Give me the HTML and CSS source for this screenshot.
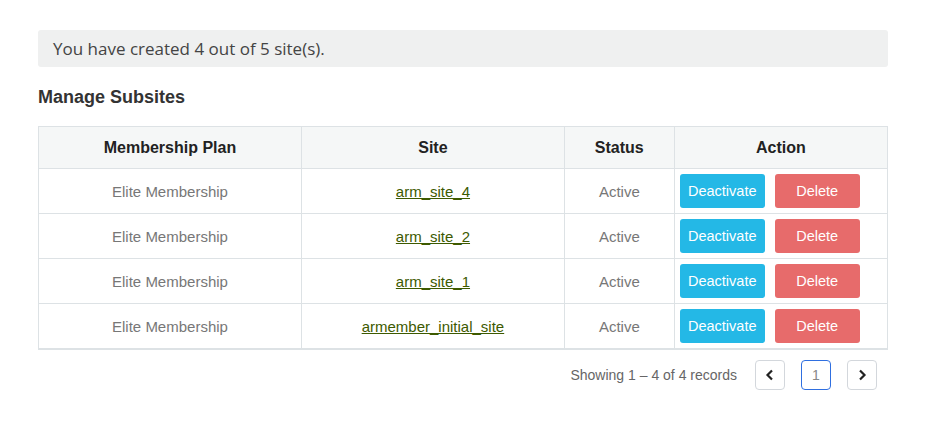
FILE: index.html
```html
<!DOCTYPE html>
<html>
<head>
<meta charset="utf-8">
<link rel="stylesheet" href="styles.css">
</head>
<body>
<div class="wrap">
  <div class="notice">You have created 4 out of 5 site(s).</div>
  <h2 class="title">Manage Subsites</h2>
  <table class="grid">
    <thead>
      <tr><th class="c1">Membership Plan</th><th class="c2">Site</th><th class="c3">Status</th><th class="c4">Action</th></tr>
    </thead>
    <tbody>
      <tr><td>Elite Membership</td><td><a href="#">arm_site_4</a></td><td>Active</td><td class="act"><span class="btn blue">Deactivate</span><span class="btn red">Delete</span></td></tr>
      <tr><td>Elite Membership</td><td><a href="#">arm_site_2</a></td><td>Active</td><td class="act"><span class="btn blue">Deactivate</span><span class="btn red">Delete</span></td></tr>
      <tr><td>Elite Membership</td><td><a href="#">arm_site_1</a></td><td>Active</td><td class="act"><span class="btn blue">Deactivate</span><span class="btn red">Delete</span></td></tr>
      <tr><td>Elite Membership</td><td><a href="#">armember_initial_site</a></td><td>Active</td><td class="act"><span class="btn blue">Deactivate</span><span class="btn red">Delete</span></td></tr>
    </tbody>
  </table>
  <div class="pager">
    <span class="info">Showing 1 – 4 of 4 records</span>
    <span class="pbtn first"><svg width="10" height="12" viewBox="0 0 10 12"><path d="M7 1.5 L2.5 6 L7 10.5" fill="none" stroke="#222" stroke-width="2.2"/></svg></span>
    <span class="pbtn cur">1</span>
    <span class="pbtn"><svg width="10" height="12" viewBox="0 0 10 12"><path d="M3 1.5 L7.5 6 L3 10.5" fill="none" stroke="#222" stroke-width="2.2"/></svg></span>
  </div>
</div>
</body>
</html>
```

FILE: styles.css
```css
html, body { margin: 0; padding: 0; background: #fff; }
body { font-family: "Liberation Sans", Arial, sans-serif; }
.wrap { width: 850px; margin-left: 38px; padding-top: 30px; }
.notice {
  background: #eff0f0;
  border-radius: 3px;
  height: 37px;
  line-height: 37px;
  padding-left: 15px;
  font-family: "Open Sans", sans-serif;
  font-size: 17px;
  color: #444;
}
.title {
  margin: 20px 0 0 0;
  font-size: 18px;
  font-weight: bold;
  color: #333;
  height: 39px;
  line-height: 20px;
}
.grid {
  width: 850px;
  border-collapse: collapse;
  border: 1px solid #dde2e5;
  border-bottom: 2px solid #dde2e5;
  table-layout: fixed;
}
.grid th {
  background: #f5f7f7;
  height: 41px;
  font-size: 16px;
  font-weight: bold;
  color: #222;
  border: 1px solid #dde2e5;
  text-align: center;
  padding: 0;
}
.c1 { width: 31%; }
.c2 { width: 31%; }
.c3 { width: 12.88%; }
.c4 { width: 25.12%; }
.grid td {
  height: 44px;
  border: 1px solid #dde2e5;
  text-align: center;
  font-size: 15px;
  color: #777;
  padding: 0;
}
.grid a { color: #3d5a00; text-decoration: underline; }
.grid td.act { text-align: left; padding-left: 5px; }
.btn {
  display: inline-block;
  width: 85px;
  height: 34px;
  line-height: 34px;
  border-radius: 3px;
  color: #fff;
  text-align: center;
  font-size: 14.5px;
  vertical-align: middle;
}
.blue { background: #24b8e6; }
.red { background: #e76b6b; margin-left: 10px; }
.pager {
  display: flex;
  justify-content: flex-end;
  align-items: center;
  margin-top: 10px;
  padding-right: 11px;
}
.info { font-size: 14px; color: #666; margin-right: 18px; }
.pbtn {
  width: 28px; height: 28px;
  border: 1px solid #d3d7dc;
  border-radius: 4px;
  display: flex; align-items: center; justify-content: center;
  margin-left: 16px;
  font-size: 14px; color: #888;
}
.pbtn.first { margin-left: 0; }
.pbtn.cur { border-color: #2f6fe0; }
```
